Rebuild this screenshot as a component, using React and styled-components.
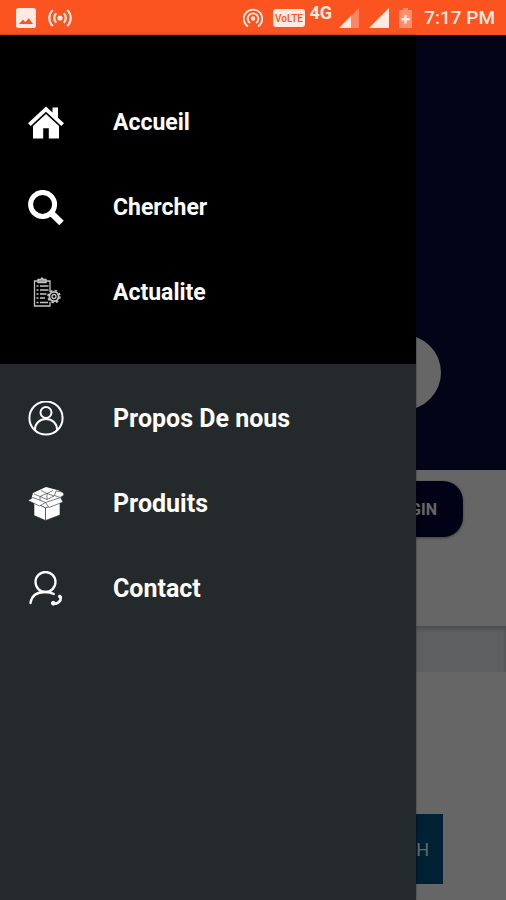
import React from "react";
import styled, { createGlobalStyle, ThemeProvider } from "styled-components";

const theme = {
  colors: {
    status: "#fb5420",
    statusIcon: "#ffe9e0",
    drawerTop: "#000000",
    drawer: "#24292b",
    text: "#ffffff",
    hero: "#0a0a3f",
    button: "#05053a",
    band: "#e8edf3",
    brand: "#005080",
  },
};

const GlobalStyle = createGlobalStyle`
  * {
    box-sizing: border-box;
  }

  body {
    margin: 0;
    background: #666666;
    font-family: Roboto, "Liberation Sans", sans-serif;
  }
`;

const Screen = styled.div`
  display: flex;
  flex-direction: column;
  min-height: 100vh;
`;

const StatusBar = styled.header`
  display: flex;
  align-items: center;
  justify-content: space-between;
  height: 35px;
  padding: 0 11px 0 16px;
  background: ${({ theme }) => theme.colors.status};
  color: ${({ theme }) => theme.colors.statusIcon};

  svg {
    display: block;
    fill: currentColor;
  }
`;

const StatusGroup = styled.div`
  display: flex;
  align-items: center;
  gap: ${({ $gap }) => $gap}px;
`;

const Network = styled.span`
  align-self: flex-start;
  margin: 0 -3px 0 -5px;
  font-size: 18px;
  font-weight: 700;
  line-height: 14px;
`;

const Clock = styled.time`
  margin-left: 2px;
  font-size: 19px;
  font-weight: 500;
  line-height: 24px;
`;

const Stage = styled.div`
  position: relative;
  flex: 1;
  display: flex;
  flex-direction: column;
`;

const Page = styled.main`
  flex: 1;
  background: #ffffff;
`;

const Hero = styled.section`
  height: 435px;
  padding: 300px 65px 0;
  background: ${({ theme }) => theme.colors.hero};
`;

const SearchInput = styled.input`
  display: block;
  width: 100%;
  height: 75px;
  padding: 0 36px;
  border: 0;
  border-radius: 38px;
  background: #ffffff;
`;

const Account = styled.section`
  display: flex;
  justify-content: flex-end;
  align-items: flex-start;
  height: 156px;
  padding: 11px 43px 0;
`;

const LoginButton = styled.button`
  height: 56px;
  padding: 0 26px;
  border: 0;
  border-radius: 20px;
  background: ${({ theme }) => theme.colors.button};
  box-shadow: 0 1px 3px rgba(0, 0, 0, 0.4);
  color: #ffffff;
  font-family: inherit;
  font-size: 16px;
  font-weight: 700;
`;

const Band = styled.div`
  height: 46px;
  background: ${({ theme }) => theme.colors.band};
  box-shadow: inset 0 3px 4px rgba(0, 0, 0, 0.2);
`;

const Brands = styled.section`
  display: flex;
  justify-content: flex-end;
  padding: 142px 63px 16px;
`;

const BrandTile = styled.div`
  display: flex;
  align-items: center;
  justify-content: flex-end;
  width: 70px;
  height: 70px;
  padding-right: 14px;
  background: ${({ theme }) => theme.colors.brand};
  color: #ffffff;
  font-size: 18px;
  font-weight: 400;
`;

const Scrim = styled.div`
  position: absolute;
  inset: 0;
  background: rgba(0, 0, 0, 0.6);
`;

const Drawer = styled.nav`
  position: absolute;
  top: 0;
  bottom: 0;
  left: 0;
  width: calc(100% - 90px);
  background: ${({ theme }) => theme.colors.drawer};
  box-shadow: 0 0 2px rgba(0, 0, 0, 0.5);
`;

const Menu = styled.ul`
  margin: 0;
  padding: ${({ $primary }) => ($primary ? "45px 0 29px" : "12px 0")};
  background: ${({ theme, $primary }) =>
    $primary ? theme.colors.drawerTop : "transparent"};
  font-size: ${({ $primary }) => ($primary ? 23 : 25)}px;
  list-style-type: none;
`;

const MenuLink = styled.a`
  display: flex;
  align-items: center;
  gap: 49px;
  height: 85px;
  padding-left: 28px;
  color: ${({ theme }) => theme.colors.text};
  font-weight: 700;
  text-decoration: none;

  svg {
    flex: none;
    width: 36px;
    height: 36px;
  }
`;

const HomeIcon = () => (
  <svg viewBox="0 0 36 36" fill="#fff">
    <path d="M18 1.5 24.5 7.6V2.5H30v10.3l6 5.4-2.7 2.7L18 6.8 2.7 20.9 0 18.2z" />
    <path d="M18 9 31 21v12.5H20.8V23.3h-5.6v10.2H5V21z" />
  </svg>
);

const SearchIcon = () => (
  <svg viewBox="0 0 36 36" fill="none" stroke="#fff">
    <circle cx="14.6" cy="14.4" r="12" strokeWidth="5" />
    <path d="M23.5 23.3 33.5 33" strokeWidth="6.4" />
  </svg>
);

const NewsIcon = () => (
  <svg viewBox="0 0 36 36" fill="none" stroke="#c4c4c4" strokeWidth="1.3">
    <path d="M22 17V6H6.500v25H22v-4" />
    <path d="M10 7.500V4.500h2.500l1.500-1.500 1.500 1.500H18v3z" fill="#999" />
    <path d="M8.500 11h2M12 11h8.500M8.500 15h2M12 15h8.500M8.500 19h2M12 19h6.500M8.500 23h2M12 23h5M8.500 27.500h2M12 27.500h8" />
    <circle cx="26" cy="21.500" r="4.600" strokeWidth="1.800" />
    <circle cx="26" cy="21.500" r="6" strokeWidth="1.600" strokeDasharray="2.400 2.310" />
    <circle cx="26" cy="21.500" r="2" />
  </svg>
);

const ProfileIcon = () => (
  <svg viewBox="0 0 36 36" fill="none" stroke="#fff" strokeWidth="2">
    <circle cx="18" cy="17" r="16.600" />
    <circle cx="18" cy="11.500" r="5.500" />
    <path d="M7 29.500v-1.300c0-5.700 4.800-10.200 11-10.200s11 4.500 11 10.200v1.300" />
  </svg>
);

const BoxIcon = () => (
  <svg viewBox="0 0 36 36" fill="#fff" stroke="#24292b" strokeWidth="0.6" strokeLinejoin="round">
    <path d="M5 7 18 1 31 4.500 36 8 31 14 18 22 3 14z" stroke="none" />
    <path d="M6 8 12 10.500 18.500 7.500M13 4.500 19 7.500 25 4.500M19 7.500 26 10 31 7M12 10.500 19 13.500 26 10M19 7.500v6M12 10.500v4" fill="none" />
    <path d="M6 16 17.500 22V34.500L6 29.500z" />
    <path d="M17.500 22 32 16v13L17.500 34.500z" />
    <path d="M5 11.500 0 14.500 11.500 20 17.500 16.500z" />
    <path d="M17.500 16.500 32.500 11.500 35 16 21 21.500z" />
    <path d="M28 5 34.500 6 36 9 32 11.500 26.500 9.500z" />
  </svg>
);

const ContactIcon = () => (
  <svg viewBox="0 0 36 36" fill="none" stroke="#fff" strokeWidth="2.300" strokeLinecap="round">
    <circle cx="17.500" cy="11" r="10" />
    <path d="M2.500 32c1-7 5.500-11 14.500-11 3.500 0 6.300.700 8.800 2" />
    <path d="M32.800 26.500c.200 3.500-2.800 6.500-7.300 6.500" strokeWidth="2.600" />
    <circle cx="31.800" cy="25.500" r="1.400" fill="#fff" strokeWidth="1" />
    <circle cx="25.300" cy="32.200" r="1.900" fill="#fff" strokeWidth="1" />
  </svg>
);

const primaryItems = [
  { label: "Accueil", icon: HomeIcon },
  { label: "Chercher", icon: SearchIcon },
  { label: "Actualite", icon: NewsIcon },
];

const secondaryItems = [
  { label: "Propos De nous", icon: ProfileIcon },
  { label: "Produits", icon: BoxIcon },
  { label: "Contact", icon: ContactIcon },
];

function MenuList({ items, primary }) {
  return (
    <Menu $primary={primary}>
      {items.map(({ label, icon: Icon }) => (
        <li key={label}>
          <MenuLink href="#">
            <Icon />
            {label}
          </MenuLink>
        </li>
      ))}
    </Menu>
  );
}

function Status() {
  return (
    <StatusBar>
      <StatusGroup $gap={12}>
        <svg width="20" height="20" viewBox="0 0 20 20">
          <path
            fillRule="evenodd"
            d="M2.500 0h15A2.500 2.500 0 0 1 20 2.500v15a2.500 2.500 0 0 1-2.500 2.500h-15A2.500 2.500 0 0 1 0 17.500v-15A2.500 2.500 0 0 1 2.500 0zM3 16h14l-4.300-5.800-3.300 4-2.400-2.600z"
          />
        </svg>
        <svg width="24" height="20" viewBox="0 0 24 20">
          <circle cx="12" cy="10" r="2.600" />
          <g fill="none" stroke="currentColor" strokeWidth="2.200">
            <path d="M8.300 5.300a6.300 6.300 0 0 0 0 9.400M15.700 5.300a6.300 6.300 0 0 1 0 9.400M4.800 2a11 11 0 0 0 0 16M19.200 2a11 11 0 0 1 0 16" />
          </g>
        </svg>
      </StatusGroup>
      <StatusGroup $gap={10}>
        <svg width="20" height="20" viewBox="0 0 20 20">
          <circle cx="10" cy="10.500" r="2.200" />
          <g fill="none" stroke="currentColor" strokeWidth="1.900">
            <path d="M7 15a5.300 5.300 0 1 1 6 0M5 18.500a9.200 9.200 0 1 1 10 0" />
          </g>
        </svg>
        <svg width="32" height="18" viewBox="0 0 32 18">
          <rect width="32" height="18" rx="3" />
          <text
            x="16"
            y="13"
            textAnchor="middle"
            fontSize="10"
            fontWeight="500"
            fill={theme.colors.status}
          >
            VoLTE
          </text>
        </svg>
        <Network>4G</Network>
        <svg width="20" height="20" viewBox="0 0 20 20">
          <path d="M20 0v20H0z" opacity="0.35" />
          <path d="M12 8v12H0z" />
        </svg>
        <svg width="20" height="20" viewBox="0 0 20 20">
          <path d="M20 0v20H0z" />
        </svg>
        <svg width="13" height="20" viewBox="0 0 13 20">
          <path d="M4 0h5v2h4v18H0V2h4z" opacity="0.4" />
          <path d="M5.300 7h2.400v3h3v2.400h-3v3H5.300v-3h-3V10h3z" />
        </svg>
        <Clock>7:17 PM</Clock>
      </StatusGroup>
    </StatusBar>
  );
}

function App() {
  return (
    <ThemeProvider theme={theme}>
      <GlobalStyle />
      <Screen>
        <Status />
        <Stage>
          <Page>
            <Hero>
              <SearchInput type="search" aria-label="Chercher" />
            </Hero>
            <Account>
              <LoginButton type="button">LOGIN</LoginButton>
            </Account>
            <Band />
            <Brands>
              <BrandTile>H</BrandTile>
            </Brands>
          </Page>
          <Scrim />
          <Drawer>
            <MenuList items={primaryItems} primary />
            <MenuList items={secondaryItems} />
          </Drawer>
        </Stage>
      </Screen>
    </ThemeProvider>
  );
}

export default App;
